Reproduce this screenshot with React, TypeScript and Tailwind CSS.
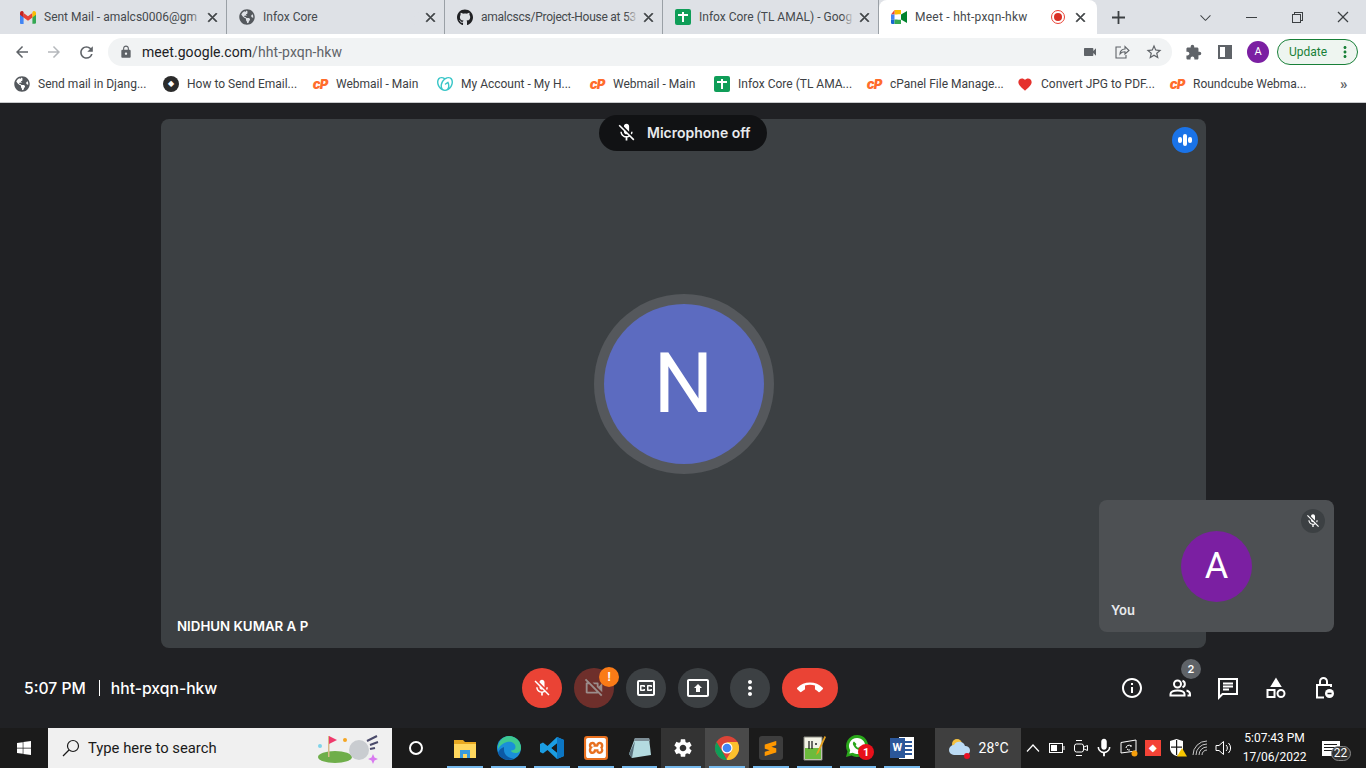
import type { ReactNode } from "react";
import {
  MdArrowBack,
  MdArrowForward,
  MdCallEnd,
  MdExtension,
  MdFavorite,
  MdInfoOutline,
  MdLock,
  MdMic,
  MdMicOff,
  MdMoreVert,
  MdOutlineClosedCaption,
  MdOutlinePresentToAll,
  MdOutlineVideocamOff,
  MdRefresh,
  MdSettings,
  MdStarBorder,
  MdVideocam,
} from "react-icons/md";
import { FaGithub, FaGlobeAmericas, FaWindows } from "react-icons/fa";
import { SiGodaddy, SiSublimetext, SiXampp } from "react-icons/si";
import { VscChromeClose, VscChromeMinimize, VscChromeRestore, VscChevronDown } from "react-icons/vsc";

const ui = "font-['Roboto',sans-serif]";
const meet = "font-['Inter',sans-serif]";

function Globe() {
  return <FaGlobeAmericas size={16} className="text-[#54585d]" />;
}

function Gmail() {
  return (
    <svg width="16" height="13" viewBox="0 0 16 13">
      <path d="M0 2v9.5A1.2 1.2 0 0 0 1.2 13H3.6V5.5z" fill="#4285f4" />
      <path d="M16 2v9.5a1.2 1.2 0 0 1-1.2 1.2h-2.4V5.5z" fill="#34a853" />
      <path d="M3.6 6.5 8 9.8l4.4-3.3V2L8 5.3 3.6 2z" fill="#ea4335" />
      <path d="M0 2c0-1.6 1.8-2.5 3-1.6l.6.5V6.5L0 3.8z" fill="#c5221f" />
      <path d="M16 2c0-1.6-1.8-2.5-3-1.6l-.6.5V6.5L16 3.8z" fill="#fbbc04" />
    </svg>
  );
}

function Sheets() {
  return (
    <span className="relative block h-4 w-4 rounded-[2px] bg-[#0f9d58]">
      <span className="absolute left-[3px] top-[5px] h-[2px] w-[10px] bg-white" />
      <span className="absolute left-[7px] top-[3px] h-[10px] w-[2px] bg-white" />
    </span>
  );
}

function MeetLogo() {
  return (
    <svg width="16" height="14" viewBox="0 0 16 14">
      <path d="M3.5 0H10v4.5H3.5z" fill="#fbbc04" />
      <path d="M3.5 0v4.5H0z" fill="#ea4335" />
      <path d="M0 4.5h3.5v5H0z" fill="#4285f4" />
      <path d="M0 9.5h3.5V14H1.2A1.2 1.2 0 0 1 0 12.800z" fill="#1967d2" />
      <path d="M3.5 9.500H10V14H3.500z" fill="#34a853" />
      <path d="M10 4.500 16 1v12l-6-3.500z" fill="#00832d" />
      <path d="M6.500 4.500H10v5H6.500z" fill="#ffffff" />
    </svg>
  );
}

function ChromeLogo() {
  return (
    <svg width="24" height="24" viewBox="0 0 24 24">
      <circle cx="12" cy="12" r="12" fill="#db4437" />
      <path d="M12 6h10.400A12 12 0 0 1 11 24l6-10z" fill="#fbc02d" />
      <path d="M1.600 6 7 15l5 9a12 12 0 0 1-10.400-18z" fill="#0f9d58" />
      <circle cx="12" cy="12" r="5.500" fill="#ffffff" />
      <circle cx="12" cy="12" r="4.300" fill="#4285f4" />
    </svg>
  );
}

type TabInfo = { title: string; icon: ReactNode; width: string; track?: string };

const tabs: TabInfo[] = [
  { title: "Sent Mail - amalcs0006@gm", icon: <Gmail />, width: "w-[219px]" },
  { title: "Infox Core", icon: <Globe />, width: "w-[218px]" },
  {
    title: "amalcscs/Project-House at 53",
    icon: <FaGithub size={17} className="text-[#202124]" />,
    width: "w-[218px]",
    track: "tracking-[-0.25px]",
  },
  { title: "Infox Core (TL AMAL) - Goog", icon: <Sheets />, width: "w-[216px]" },
];

function Tab({ t }: { t: TabInfo }) {
  return (
    <div className={`${t.width} flex h-[34px] shrink-0 items-center border-r border-[#9aa0a6] pl-3 pr-[7px]`}>
      <span className="flex w-4 shrink-0 justify-center">{t.icon}</span>
      <div className={`relative ml-2 min-w-0 flex-1 overflow-hidden whitespace-nowrap text-xs text-[#45494d] ${t.track ?? ""}`}>
        {t.title}
        <span className="absolute inset-y-0 right-0 w-3 bg-linear-to-r from-transparent to-[#dee1e6]" />
      </div>
      <VscChromeClose size={13} className="ml-1 shrink-0 stroke-1 text-[#3c4043]" />
    </div>
  );
}

function TabStrip() {
  return (
    <div className="flex h-[34px] items-center bg-[#dee1e6] pl-2">
      {tabs.map((t) => (
        <Tab key={t.title} t={t} />
      ))}
      <div className="flex h-[34px] w-[218px] shrink-0 items-center rounded-t-lg bg-white pl-3 pr-[10px]">
        <MeetLogo />
        <span className="ml-2 flex-1 whitespace-nowrap text-xs tracking-[0.25px] text-[#45494d]">Meet - hht-pxqn-hkw</span>
        <span className="mr-[9px] flex h-3.5 w-3.5 items-center justify-center rounded-full border border-[#ea4335]">
          <span className="h-2 w-2 rounded-full bg-[#d93025]" />
        </span>
        <VscChromeClose size={13} className="stroke-1 text-[#3c4043]" />
      </div>
      <svg className="ml-[15px]" width="13" height="13" viewBox="0 0 13 13">
        <path d="M6.500 0v13M0 6.500h13" stroke="#3c4043" strokeWidth="1.800" />
      </svg>
      <div className="ml-auto flex items-center text-[#3c4043]">
        <span className="flex w-[46px] justify-center"><VscChevronDown size={17} /></span>
        <span className="flex w-[46px] justify-center"><VscChromeMinimize size={16} /></span>
        <span className="flex w-[46px] justify-center"><VscChromeRestore size={16} /></span>
        <span className="flex w-[46px] justify-center"><VscChromeClose size={16} /></span>
      </div>
    </div>
  );
}

function AddressRow() {
  return (
    <div className="flex h-9 items-center bg-white">
      <div className="flex w-[108px] shrink-0 items-center pl-[13px] text-[#5f6368]">
        <MdArrowBack size={18} />
        <MdArrowForward size={18} className="ml-[14px] text-[#b5b8bc]" />
        <MdRefresh size={19} className="ml-[14px]" />
      </div>
      <div className="flex h-7 w-[1064px] items-center rounded-full bg-[#f1f3f4] pl-[11px] pr-2 text-[#5f6368]">
        <MdLock size={14} />
        <span className="ml-[9px] text-sm tracking-[0.06px] text-[#202124]">
          meet.google.com<span className="text-[#5f6368]">/hht-pxqn-hkw</span>
        </span>
        <MdVideocam size={16} className="ml-auto" />
        <svg className="ml-4" width="16" height="16" viewBox="0 0 16 16" fill="none" stroke="#5f6368" strokeWidth="1.100">
          <path d="M7 3H2v11h10v-3M6 10c0-3 2-5 5-5V2.500L15 6.500 11 10V7.800C8.500 7.800 7 8.500 6 10z" />
        </svg>
        <MdStarBorder size={18} className="ml-[15px] mr-[1px]" />
      </div>
      <MdExtension size={17} className="ml-[13px] text-[#5f6368]" />
      <span className="ml-[16px] block h-[14px] w-[14px] border-2 border-r-[7px] border-[#5f6368]" />
      <span className="ml-[15px] flex h-[22px] w-[22px] items-center justify-center rounded-full bg-[#7b1fa2] text-[11px] text-white">A</span>
      <div className="ml-[8px] flex h-[26px] w-[81px] items-center rounded-full border border-[#188038] bg-[#eef5f0] pl-[11px] text-xs text-[#188038]">
        Update
        <MdMoreVert size={18} className="ml-[9px]" />
      </div>
    </div>
  );
}

type BookmarkInfo = { title: string; icon: ReactNode; width: string };

const cp = (
  <span className={`${meet} text-[13px] font-black italic leading-none tracking-[-1px] text-[#ff6c2c]`}>cP</span>
);

const bookmarks: BookmarkInfo[] = [
  { title: "Send mail in Djang...", icon: <Globe />, width: "w-[149px]" },
  {
    title: "How to Send Email...",
    icon: (
      <span className="flex h-4 w-4 items-center justify-center rounded-full bg-[#2b2b2b] text-[8px] text-white">◆</span>
    ),
    width: "w-[149px]",
  },
  { title: "Webmail - Main", icon: cp, width: "w-[125px]" },
  { title: "My Account - My H...", icon: <SiGodaddy size={16} className="text-[#39c6c8]" />, width: "w-[152px]" },
  { title: "Webmail - Main", icon: cp, width: "w-[125px]" },
  { title: "Infox Core (TL AMA...", icon: <Sheets />, width: "w-[152px]" },
  { title: "cPanel File Manage...", icon: cp, width: "w-[151px]" },
  { title: "Convert JPG to PDF...", icon: <MdFavorite size={17} className="text-[#e5322d]" />, width: "w-[152px]" },
  { title: "Roundcube Webma...", icon: cp, width: "w-[150px]" },
];

function Bookmarks() {
  return (
    <div className="flex h-[33px] items-center border-b border-[#c8cacc] bg-white pb-[4px] pl-[14px]">
      {bookmarks.map((b, i) => (
        <div key={i} className={`${b.width} flex shrink-0 items-center`}>
          <span className="flex w-4 shrink-0 justify-center">{b.icon}</span>
          <span className="ml-2 whitespace-nowrap text-xs text-[#3c4043]">{b.title}</span>
        </div>
      ))}
      <span className="ml-[21px] text-[15px] font-bold leading-none text-[#5f6368]">»</span>
    </div>
  );
}

function Stage() {
  return (
    <div className="relative ml-[161px] flex h-[529px] w-[1045px] items-center justify-center rounded-lg bg-[#3c4043]">
      <div className="absolute -top-1 left-[438px] flex h-9 w-[168px] items-center rounded-full bg-[#111214] pb-[2px] pl-[17px]">
        <MdMicOff size={21} className="text-white" />
        <span className={`${meet} ml-[10px] whitespace-nowrap text-[14px] font-semibold text-[#e8eaed]`}>Microphone off</span>
      </div>
      <span className="absolute right-2 top-2 flex h-[26px] w-[26px] items-center justify-center gap-[1px] rounded-full bg-[#1a73e8]">
        <span className="h-[6px] w-1 rounded-full bg-white" />
        <span className="h-3 w-1 rounded-full bg-white" />
        <span className="h-[6px] w-1 rounded-full bg-white" />
      </span>
      <div className="flex h-[180px] w-[180px] items-center justify-center rounded-full bg-[#55585c]">
        <div className={`${ui} flex h-40 w-40 items-center justify-center rounded-full bg-[#5c6bc0] text-[84px] text-white`}>N</div>
      </div>
      <span className={`${meet} absolute bottom-[11px] left-4 text-[13.300px] font-semibold text-white`}>NIDHUN KUMAR A P</span>
      <div className="absolute -right-[128px] bottom-4 flex h-[132px] w-[235px] items-center justify-center rounded-lg bg-[#4d5053]">
        <span className="absolute right-[9px] top-[9px] flex h-6 w-6 items-center justify-center rounded-full bg-[#3c4043]">
          <MdMicOff size={16} className="text-white" />
        </span>
        <div className={`${ui} flex h-[71px] w-[71px] items-center justify-center rounded-full bg-[#7b1fa2] text-[36px] text-white`}>A</div>
        <span className={`${meet} absolute bottom-3 left-3 text-[13px] font-semibold text-[#e8eaed]`}>You</span>
      </div>
    </div>
  );
}

function Controls() {
  return (
    <div className="flex h-20 items-center">
      <div className={`${meet} flex w-[522px] shrink-0 items-center pl-6 pt-px text-[15.700px] font-medium text-white`}>
        <span>5:07 PM</span>
        <span className="ml-[13px] h-4 w-px bg-white" />
        <span className="ml-[11px]">hht-pxqn-hkw</span>
      </div>
      <div className="flex w-[316px] shrink-0 items-center gap-3">
        <span className="flex h-10 w-10 items-center justify-center rounded-full bg-[#ea4335]">
          <MdMicOff size={20} className="text-white" />
        </span>
        <span className="relative flex h-10 w-10 items-center justify-center rounded-full bg-[#6e2f2b]">
          <MdOutlineVideocamOff size={22} className="text-[#9b8d8b]" />
          <span className="absolute -right-[5px] -top-[1px] flex h-5 w-5 items-center justify-center rounded-full bg-[#fa7b17] text-xs font-bold text-white">!</span>
        </span>
        <span className="flex h-10 w-10 items-center justify-center rounded-full bg-[#3c4043]">
          <MdOutlineClosedCaption size={24} className="text-white" />
        </span>
        <span className="flex h-10 w-10 items-center justify-center rounded-full bg-[#3c4043]">
          <MdOutlinePresentToAll size={24} className="text-white" />
        </span>
        <span className="flex h-10 w-10 items-center justify-center rounded-full bg-[#3c4043]">
          <MdMoreVert size={24} className="text-white" />
        </span>
        <span className="flex h-10 w-14 items-center justify-center rounded-full bg-[#ea4335]">
          <MdCallEnd size={26} className="text-white" />
        </span>
      </div>
      <div className="ml-[270px] flex items-center text-white">
        <span className="flex w-12 justify-center"><MdInfoOutline size={24} /></span>
        <span className="relative flex w-12 justify-center">
          <svg width="24" height="24" viewBox="0 0 24 24" fill="none" stroke="white" strokeWidth="2">
            <circle cx="9.500" cy="8" r="3.500" />
            <path d="M14.500 4.700a3.500 3.500 0 0 1 0 6.600" />
            <path d="M2.500 19.500v-1.500c0-2 3-3.500 7-3.500s7 1.500 7 3.500v1.500z" />
            <path d="M18.500 14.500c2 .5 3.500 1.700 3.500 3.500v1.500h-2.500" />
          </svg>
          <span className={`${meet} absolute -top-[17px] right-[3px] flex h-5 w-5 items-center justify-center rounded-full bg-[#5f6368] text-[11px] font-semibold`}>2</span>
        </span>
        <span className="flex w-12 justify-center">
          <svg width="24" height="24" viewBox="0 0 24 24" fill="none" stroke="white" strokeWidth="2">
            <path d="M3 3h18v15H6.500L3 21.500z" />
            <path d="M7 7.500h10M7 10.500h10M7 13.500h6" strokeWidth="1.800" />
          </svg>
        </span>
        <span className="flex w-12 justify-center">
          <svg width="24" height="24" viewBox="0 0 24 24" fill="none" stroke="white" strokeWidth="2">
            <path d="M12 3.500 16 10H8z" fill="white" />
            <rect x="3.500" y="14" width="7" height="7" />
            <circle cx="17" cy="17.500" r="3.500" />
          </svg>
        </span>
        <span className="flex w-12 justify-center">
          <svg width="24" height="24" viewBox="0 0 24 24" fill="none" stroke="white" strokeWidth="2">
            <path d="M12 21.500H5V9h14v2M8 9V5.500a3.500 3.500 0 0 1 7 0V9" />
            <circle cx="17.500" cy="17.500" r="4.500" fill="white" stroke="none" />
            <path d="M15.500 17.500h4" stroke="#202124" strokeWidth="1.500" />
          </svg>
        </span>
      </div>
    </div>
  );
}

type TaskItem = { key: string; icon: ReactNode; bg?: string };

const taskItems: TaskItem[] = [
  {
    key: "explorer",
    icon: (
      <svg width="22" height="20" viewBox="0 0 22 20">
        <path d="M0 2h9l2 2h11v4H0z" fill="#e8a922" />
        <path d="M0 6h22v14H0z" fill="#ffd75e" />
        <path d="M6 12h10v8H6z" fill="#3a9bdc" />
        <path d="M9 16h4v4H9z" fill="#ffd75e" />
      </svg>
    ),
  },
  {
    key: "edge",
    icon: (
      <svg width="24" height="24" viewBox="0 0 24 24">
        <circle cx="12" cy="12" r="12" fill="#1a8fd8" />
        <path d="M12 0a12 12 0 0 1 12 12c0 3-2.500 5-5.500 5-2.500 0-4.500-1-4.500-2.500 3 0 4.500-1.500 4.500-3.500C18.500 7 14 5 10 6 6 7 3.500 9 1 13 .5 6 6 0 12 0z" fill="#3ec98f" />
        <path d="M7 14c0 5 5 8.500 10 8.500A12 12 0 0 1 5 22c-2-1-3.500-3-4-5 1-3 3-5 6-6z" fill="#0c59a4" />
      </svg>
    ),
  },
  {
    key: "vscode",
    icon: (
      <svg width="24" height="24" viewBox="0 0 24 24">
        <path d="M17 1 24 4v16l-7 3-9.500-9L3 17.500 0 16V8l3-1.500L7.500 10zm0 6.500L11.500 12l5.500 4.500z" fill="#1b9de2" />
        <path d="M17 1 24 4v16l-7 3z" fill="#0b76c4" />
        <path d="M17 7.500v9L11.500 12z" fill="#1b1b1b" />
      </svg>
    ),
  },
  {
    key: "xampp",
    icon: (
      <span className="flex h-6 w-6 items-center justify-center rounded-[3px] bg-[#e8701f]">
        <SiXampp size={20} className="text-white" />
      </span>
    ),
  },
  {
    key: "notes",
    icon: (
      <svg width="24" height="24" viewBox="0 0 24 24">
        <path d="M7 2h14l2 17-19 3-3-4z" fill="#b4dbe0" />
        <path d="M7 2h14l1 3H6z" fill="#7d8e96" />
        <path d="M1 18 7 5 4 22z" fill="#59707c" />
      </svg>
    ),
  },
  {
    key: "settings",
    bg: "bg-[#333333]",
    icon: <MdSettings size={22} className="text-white" />,
  },
  { key: "chrome", bg: "bg-[#4a4a4a]", icon: <ChromeLogo /> },
  {
    key: "sublime",
    icon: (
      <span className="flex h-6 w-6 items-center justify-center rounded-[3px] bg-[#3d3d3d]">
        <SiSublimetext size={15} className="text-[#ff9800]" />
      </span>
    ),
  },
  {
    key: "notepad",
    icon: (
      <svg width="24" height="26" viewBox="0 0 24 26">
        <path d="M2 2h18v23H2z" fill="#f3f3e6" stroke="#8a8a80" />
        <path d="M3 13h16v11H3z" fill="#6cbb3c" />
        <path d="M7 6v8M10 6v8M13 9h2" stroke="#222222" strokeWidth="1.300" />
        <path d="M22.500 1 15 17l-1 3 2.500-2L24 2z" fill="#e6a11f" />
      </svg>
    ),
  },
  {
    key: "whatsapp",
    icon: (
      <span className="relative block h-[26px] w-6">
        <svg width="22" height="22" viewBox="0 0 22 22">
          <path d="M11 0a11 11 0 0 0-9.500 16.500L0 22l5.600-1.500A11 11 0 1 0 11 0z" fill="#29a71a" />
          <path d="M11 3a8 8 0 0 0-6.800 12.200L3.400 18.600l3.400-.9A8 8 0 1 0 11 3z" fill="#ffffff" />
          <path d="M8 6.500c-1 .6-1.500 2-.8 3.500 1 2.200 2.800 4 5 4.800 1.500.5 2.800-.2 3.200-1.300l-2-1.500-1.200.8c-1-.5-2-1.500-2.500-2.600l.8-1.100z" fill="#29a71a" />
        </svg>
        <span className="absolute -right-1 bottom-[1px] flex h-4 w-4 items-center justify-center rounded-full bg-[#e8101a] text-[11px] font-bold leading-none text-white">1</span>
      </span>
    ),
  },
  {
    key: "word",
    icon: (
      <span className="relative flex h-6 w-6 items-center justify-end">
        <span className="flex h-[22px] w-[15px] flex-col justify-center gap-[2px] bg-white px-[2px]">
          <span className="h-[2px] bg-[#2b579a]" />
          <span className="h-[2px] bg-[#2b579a]" />
          <span className="h-[2px] bg-[#2b579a]" />
          <span className="h-[2px] bg-[#2b579a]" />
        </span>
        <span className="absolute left-0 top-[2px] flex h-5 w-[15px] items-center justify-center bg-[#2b579a] text-[11px] font-bold text-white">W</span>
      </span>
    ),
  },
];

function Tray() {
  return (
    <div className="flex items-center text-white">
      <svg className="ml-[5px]" width="14" height="8" viewBox="0 0 14 8" fill="none" stroke="white" strokeWidth="1.200">
        <path d="M1 7.500 7 1l6 6.500" />
      </svg>
      <svg className="ml-[9px]" width="16" height="10" viewBox="0 0 16 10" fill="none" stroke="white">
        <rect x=".5" y=".5" width="13" height="9" />
        <rect x="2" y="2" width="6" height="6" fill="white" stroke="none" />
        <path d="M15 3v4" />
      </svg>
      <svg className="ml-[9px]" width="14" height="18" viewBox="0 0 14 18" fill="none" stroke="white">
        <path d="M2 1.500h6M2 16.500h6" />
        <rect x=".5" y="5" width="9" height="8" rx="2" />
        <path d="M10 8l3.500-1.500v5L10 10" />
      </svg>
      <MdMic size={22} className="ml-[5px]" />
      <svg className="ml-[5px]" width="18" height="18" viewBox="0 0 18 18" fill="none" stroke="white">
        <path d="M1 3.500 16 1v11l-15 2z" />
        <path d="M6 9a3 3 0 0 1 5-2M11 6v2M10 11a3 3 0 0 1-3-1" />
        <circle cx="14.500" cy="14.500" r="3" fill="#f59e0b" stroke="none" />
      </svg>
      <span className="ml-[7px] flex h-4 w-4 items-center justify-center bg-[#f44336] text-[10px] leading-none">◆</span>
      <svg className="ml-2" width="18" height="18" viewBox="0 0 18 18">
        <path d="M1 2 7.500 0 14 2v7c0 4-3 7-6.500 8C4 16 1 13 1 9z" fill="white" />
        <path d="M7 1h1.200v15H7zM2 7.500h11v1.200H2z" fill="#1a1a1a" />
        <path d="M13 9l5 8.500H8z" fill="#f7c600" />
      </svg>
      <svg className="ml-[5px]" width="16" height="16" viewBox="0 0 16 16" fill="none" stroke="#c8c8c8">
        <path d="M1 15A14 14 0 0 1 15 1M4 15A11 11 0 0 1 15 4M7 15a8 8 0 0 1 8-8M10 15a5 5 0 0 1 5-5" />
      </svg>
      <svg className="ml-[7px]" width="18" height="16" viewBox="0 0 18 16" fill="none" stroke="white">
        <path d="M1 5.500h3L8.500 1.500v13L4 10.500H1z" />
        <path d="M11 5a4 4 0 0 1 0 6M13.500 3a7 7 0 0 1 0 10" />
      </svg>
      <div className={`${ui} ml-[13px] flex w-[58px] flex-col items-center whitespace-nowrap text-xs leading-[19px] text-white`}>
        <span>5:07:43 PM</span>
        <span>17/06/2022</span>
      </div>
      <span className="relative ml-[18px] block h-[15px] w-[18px] bg-white">
        <span className="absolute left-[2px] top-[3px] h-px w-[13px] bg-[#1a1a1a]" />
        <span className="absolute left-[2px] top-[6px] h-px w-[13px] bg-[#1a1a1a]" />
        <span className="absolute left-[2px] top-[9px] h-px w-[9px] bg-[#1a1a1a]" />
        <span className={`${ui} absolute -right-[11px] top-[5px] flex h-[15px] w-[20px] items-center justify-center rounded-full border border-[#888] bg-[#333] text-[12px] leading-none text-white`}>22</span>
      </span>
    </div>
  );
}

function Taskbar() {
  return (
    <div className={`${ui} flex h-10 items-stretch bg-[#1b1b1b]`}>
      <span className="flex w-12 items-center justify-center">
        <FaWindows size={16} className="text-white" />
      </span>
      <div className="flex w-[344px] items-center bg-[#f0f0f0] pl-[14px] pr-[6px] text-[#1a1a1a]">
        <svg width="18" height="18" viewBox="0 0 18 18" fill="none" stroke="#1a1a1a" strokeWidth="1.200">
          <circle cx="11" cy="7" r="5.500" />
          <path d="M7 11l-6 6" />
        </svg>
        <span className="ml-[8px] pt-px text-[14.800px]">Type here to search</span>
        <svg className="ml-auto" width="68" height="32" viewBox="0 0 68 32">
          <ellipse cx="17" cy="25" rx="17" ry="6" fill="#6fae4a" />
          <path d="M10 4h1.500v21H10z" fill="#d8b98a" />
          <path d="M11 4l8 4-8 4z" fill="#ef3a6c" />
          <circle cx="2" cy="14" r="2" fill="#7fd4ea" />
          <circle cx="27" cy="8" r="2" fill="#f5a623" />
          <circle cx="41" cy="18" r="10" fill="#c9ccd0" />
          <path d="M49 9l10-5M52 13l8-3M52 17l5-1" stroke="#4a4a6a" strokeWidth="2" />
          <path d="M55 22l1.500 3.500L60 27l-3.500 1.500L55 32l-1.500-3.500L50 27l3.500-1.500z" fill="#d97af0" />
        </svg>
      </div>
      <span className="flex w-12 items-center justify-center">
        <span className="h-[14px] w-[14px] rounded-full border-2 border-white" />
      </span>
      <div className="ml-[3px] flex">
        {taskItems.map((t) => (
          <div key={t.key} className={`relative flex w-[43.700px] items-center justify-center ${t.bg ?? ""}`}>
            {t.icon}
            <span className="absolute inset-x-[4px] bottom-0 h-[2px] bg-[#76b9ed]" />
          </div>
        ))}
      </div>
      <div className="ml-[11px] flex w-[86px] items-center bg-[#3f3f3f] pl-[13px] text-white">
        <svg width="24" height="24" viewBox="0 0 24 24">
          <circle cx="9" cy="8" r="5" fill="#f5c242" />
          <path d="M6 19a5 5 0 0 1 0-10 6 6 0 0 1 11 1 4.500 4.500 0 0 1 1 9z" fill="#bcdcf5" />
          <circle cx="19" cy="20" r="3" fill="#e81123" />
        </svg>
        <span className="ml-[7px] text-sm">28°C</span>
      </div>
      <Tray />
    </div>
  );
}

export default function App() {
  return (
    <div className={`${ui} flex h-[768px] w-[1366px] flex-col overflow-hidden bg-[#202124]`}>
      <TabStrip />
      <AddressRow />
      <Bookmarks />
      <main className="flex flex-1 flex-col bg-[#202124] pt-[16px]">
        <Stage />
        <Controls />
      </main>
      <Taskbar />
    </div>
  );
}
